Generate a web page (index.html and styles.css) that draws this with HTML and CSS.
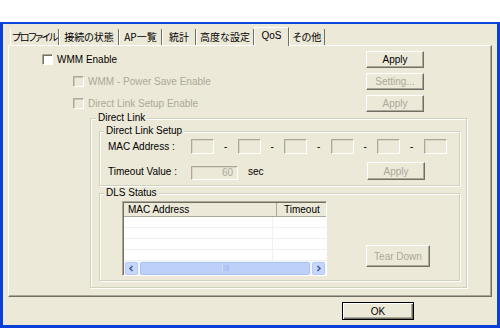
FILE: index.html
```html
<!DOCTYPE html>
<html lang="ja">
  <head>
    <meta charset="UTF-8" />
    <meta name="viewport" content="width=device-width, initial-scale=1.0" />
    <title>QoS</title>
    <link rel="stylesheet" href="styles.css">
  </head>
  <body>
    <div class="window">
      <div class="tabs">
        <span class="tab t-profile">プロファイル</span>
        <span class="tab t-status">接続の状態</span>
        <span class="tab t-ap">AP一覧</span>
        <span class="tab t-stats">統計</span>
        <span class="tab t-adv">高度な設定</span>
        <span class="tab t-qos active">QoS</span>
        <span class="tab t-other">その他</span>
      </div>

      <div class="panel">
        <div class="row">
          <label class="check"><span class="box"></span>WMM Enable</label>
          <button class="btn">Apply</button>
        </div>
        <div class="row sub">
          <label class="check disabled"><span class="box"></span>WMM - Power Save Enable</label>
          <button class="btn" disabled>Setting...</button>
        </div>
        <div class="row sub">
          <label class="check disabled"><span class="box"></span>Direct Link Setup Enable</label>
          <button class="btn" disabled>Apply</button>
        </div>

        <fieldset class="group direct-link">
          <legend>Direct Link</legend>

          <fieldset class="group inner">
            <legend>Direct Link Setup</legend>
            <div class="setup-body">
              <div class="field mac-row">
                <span class="field-label">MAC Address :</span>
                <span class="edit mac"></span><span class="dash">-</span>
                <span class="edit mac"></span><span class="dash">-</span>
                <span class="edit mac"></span><span class="dash">-</span>
                <span class="edit mac"></span><span class="dash">-</span>
                <span class="edit mac"></span><span class="dash">-</span>
                <span class="edit mac"></span>
              </div>
              <div class="field timeout-row">
                <span class="field-label">Timeout Value :</span>
                <span class="edit timeout">60</span>
                <span class="unit">sec</span>
                <button class="btn tall" disabled>Apply</button>
              </div>
            </div>
          </fieldset>

          <fieldset class="group inner">
            <legend>DLS Status</legend>
            <div class="dls-body">
              <div class="listview">
                <div class="lv-head">
                  <span class="col-mac">MAC Address</span>
                  <span class="col-time">Timeout</span>
                </div>
                <div class="lv-row"><span class="col-mac"></span><span class="col-time"></span></div>
                <div class="lv-row"><span class="col-mac"></span><span class="col-time"></span></div>
                <div class="lv-row"><span class="col-mac"></span><span class="col-time"></span></div>
                <div class="lv-row"><span class="col-mac"></span><span class="col-time"></span></div>
                <div class="scrollbar">
                  <span class="arrow">
                    <svg width="7" height="7" viewBox="0 0 7 7"><path d="M4.5 1 L2 3.5 L4.5 6" fill="none" stroke="#4d6185" stroke-width="1.6"/></svg>
                  </span>
                  <span class="thumb">
                    <svg width="7" height="6" viewBox="0 0 7 6"><path d="M1 0v6M3 0v6M5 0v6" stroke="#eef3fe" stroke-width="1"/><path d="M2 0v6M4 0v6M6 0v6" stroke="#8cabee" stroke-width="1"/></svg>
                  </span>
                  <span class="arrow">
                    <svg width="7" height="7" viewBox="0 0 7 7"><path d="M2.5 1 L5 3.5 L2.5 6" fill="none" stroke="#4d6185" stroke-width="1.6"/></svg>
                  </span>
                </div>
              </div>
              <button class="btn teardown" disabled>Tear Down</button>
            </div>
          </fieldset>
        </fieldset>
      </div>

      <div class="footer">
        <button class="btn ok">OK</button>
      </div>
    </div>
  </body>
</html>
```

FILE: styles.css
```css
body {
  margin: 0;
  background-color: #fff;
  font-family: "Liberation Sans", "Noto Sans CJK JP", sans-serif;
  font-size: 10px;
}

.window {
  box-sizing: border-box;
  margin-top: 22px;
  height: 306px;
  border-top: 2px solid #0a46df;
  border-left: 3px solid #0940d8;
  border-right: 3px solid #0940d8;
  border-bottom: 3px solid #0940d8;
  background-color: #ece9d8;
  padding: 3px 5px 0 5px;
}

/* tab strip */
.tabs {
  display: flex;
  align-items: flex-end;
  height: 18px;
  padding-left: 2px;
}

.tab {
  box-sizing: border-box;
  height: 16px;
  line-height: 15px;
  text-align: center;
  border-left: 1px solid #fff;
  border-right: 1px solid #716f64;
  font-family: "Noto Sans CJK JP", "Liberation Sans", sans-serif;
  font-feature-settings: "palt";
  white-space: nowrap;
  overflow: hidden;
}

.tab.active {
  height: 19px;
  line-height: 16px;
  margin-bottom: -1px;
  border-top: 1px solid #fff;
  background-color: #ece9d8;
  position: relative;
  font-family: "Liberation Sans", sans-serif;
}

.t-profile { width: 49px; letter-spacing: -1.5px; }
.t-status { width: 60px; }
.t-ap { width: 43px; }
.t-stats { width: 34px; }
.t-adv { width: 58px; }
.t-qos { width: 35px; }
.t-other { width: 36px; }

.panel {
  box-sizing: border-box;
  height: 252px;
  border: 1px solid;
  border-color: #fff #716f64 #716f64 #fff;
  box-shadow: inset -1px -1px 0 #aca899;
  padding-top: 5px;
}

/* checkbox rows */
.row {
  display: flex;
  align-items: center;
  height: 17px;
  margin-bottom: 5px;
  padding-left: 33px;
  padding-right: 67px;
}

.row.sub {
  padding-left: 64px;
}

.row:nth-child(3) {
  margin-bottom: 0;
}

.check {
  flex: 1;
  display: flex;
  align-items: center;
}

.box {
  box-sizing: border-box;
  width: 11px;
  height: 11px;
  margin-right: 4px;
  background-color: #fff;
  border: 1px solid;
  border-color: #aca899 #fff #fff #aca899;
  box-shadow: inset 1px 1px 0 #716f64;
}

.check.disabled {
  color: #aca899;
}

.check.disabled .box {
  background-color: #ece9d8;
  box-shadow: inset 1px 1px 0 #c9c6b6;
}

/* buttons */
.btn {
  box-sizing: border-box;
  width: 58px;
  height: 17px;
  padding: 0;
  font-family: "Liberation Sans", sans-serif;
  font-size: 10px;
  color: #000;
  background-color: #ece9d8;
  border: 1px solid;
  border-color: #fff #716f64 #716f64 #fff;
  box-shadow: inset -1px -1px 0 #aca899;
}

.btn:disabled {
  color: #aca899;
}

.btn.tall {
  height: 18px;
  margin-left: auto;
  margin-right: 34px;
}

/* group boxes */
.group {
  margin: 0;
  padding: 0;
  border: 1px solid #d0d0bf;
  box-shadow: 1px 1px 0 #fff, inset 1px 1px 0 #fff;
}

.group legend {
  margin-left: 5px;
  padding: 0 2px;
  line-height: 12px;
  height: 12px;
  background-color: #ece9d8;
}

.direct-link {
  box-sizing: border-box;
  width: 377px;
  margin-left: 81px;
  padding-bottom: 6px;
}

.group.inner {
  margin: 1px 6px 0 8px;
}

.group.inner legend {
  margin-left: 4px;
}

.setup-body {
  padding: 2px 0 5px 8px;
}

.field {
  display: flex;
  align-items: center;
}

.mac-row {
  height: 15px;
  margin-bottom: 8px;
}

.timeout-row {
  height: 18px;
}

.field-label {
  width: 83px;
}

.edit {
  box-sizing: border-box;
  height: 15px;
  border: 1px solid;
  border-color: #aca899 #fff #fff #aca899;
  box-shadow: inset 1px 1px 0 #d9d6c6;
}

.mac {
  width: 23px;
}

.dash {
  width: 23.5px;
  text-align: center;
}

.timeout {
  width: 47px;
  height: 14px;
  margin-top: 3px;
  padding-right: 4px;
  line-height: 12px;
  text-align: right;
  color: #aca899;
}

.unit {
  margin-left: 10px;
}

.dls-body {
  display: flex;
  align-items: flex-start;
  padding: 2px 0 4px 22px;
}

.listview {
  box-sizing: border-box;
  width: 205px;
  height: 75px;
  border: 1px solid;
  border-color: #aca899 #fff #fff #aca899;
  box-shadow: inset 1px 1px 0 #716f64;
  padding: 1px 0 0 1px;
  background-color: #fff;
}

.lv-head {
  display: flex;
  height: 14px;
  line-height: 13px;
  background-color: #ece9d8;
  box-shadow: inset 0 -1px 0 #aca899;
}

.lv-head span {
  box-sizing: border-box;
  padding-left: 4px;
  border-right: 1px solid #aca899;
}

.col-mac {
  width: 153px;
}

.col-time {
  width: 49px;
  padding-left: 6px;
}

.lv-head .col-time {
  padding-left: 7px;
  border-right: none;
}

.lv-row {
  display: flex;
  height: 11px;
  box-shadow: inset 0 -1px 0 #f0f0f0;
}

.lv-row .col-mac {
  border-right: 1px solid #f0f0f0;
}

.scrollbar {
  display: flex;
  align-items: center;
  gap: 2px;
  height: 14px;
  padding: 0 1px;
  background-color: #f3f6fd;
}

.arrow {
  box-sizing: border-box;
  width: 13px;
  height: 13px;
  display: flex;
  align-items: center;
  justify-content: center;
  background-color: #c6d6fc;
  border: 1px solid #b6c9f5;
  border-radius: 2px;
}

.thumb {
  flex: 1;
  box-sizing: border-box;
  height: 13px;
  display: flex;
  align-items: center;
  justify-content: center;
  background-color: #bcd0fa;
  border: 1px solid #a8c1f5;
  border-radius: 2px;
}

.btn.teardown {
  width: 64px;
  height: 22px;
  margin-left: 39px;
  margin-top: 44px;
}

.footer {
  display: flex;
  justify-content: flex-end;
  padding-top: 5px;
  padding-right: 78px;
}

.btn.ok {
  width: 72px;
  height: 18px;
  border: 1px solid #000;
  box-shadow: inset 1px 1px 0 #fff, inset -1px -1px 0 #716f64, inset -2px -2px 0 #aca899;
}
```
